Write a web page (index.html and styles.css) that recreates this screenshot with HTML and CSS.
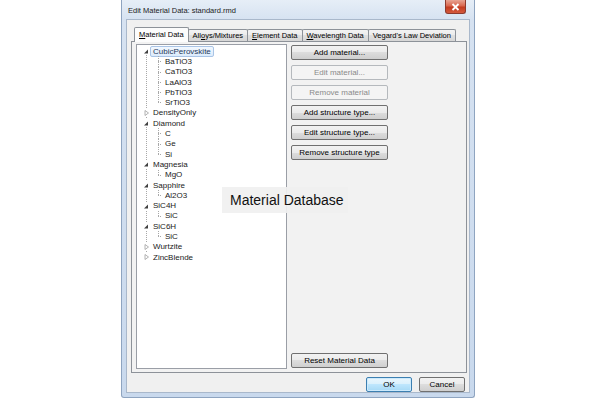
FILE: index.html
```html
<!DOCTYPE html>
<html lang="en">
<head>
    <meta charset="UTF-8">
    <title>Edit Material Data</title>
    <link rel="stylesheet" href="styles.css">
</head>
<body>
  <div class="window">
    <div class="titlebar">
      <span class="title">Edit Material Data: standard.rmd</span>
      <div class="close">
        <svg width="9" height="8" viewBox="0 0 9 8"><path d="M1.5 1 L7.5 7 M7.5 1 L1.5 7" stroke="#fff" stroke-width="1.8"/></svg>
      </div>
    </div>

    <div class="client">
      <div class="tabs">
        <div class="tab active"><u>M</u>aterial Data</div>
        <div class="tab">All<u>o</u>ys/Mixtures</div>
        <div class="tab"><u>E</u>lement Data</div>
        <div class="tab"><u>W</u>avelength Data</div>
        <div class="tab">Vegard's Law Deviation</div>
      </div>

      <div class="panel">
        <ul class="tree">
          <li>
            <div class="node"><span class="twisty open"></span><span class="label selected">CubicPerovskite</span></div>
            <ul>
              <li class="leaf"><span class="link"></span><span class="label">BaTiO3</span></li>
              <li class="leaf"><span class="link"></span><span class="label">CaTiO3</span></li>
              <li class="leaf"><span class="link"></span><span class="label">LaAlO3</span></li>
              <li class="leaf"><span class="link"></span><span class="label">PbTiO3</span></li>
              <li class="leaf"><span class="link"></span><span class="label">SrTiO3</span></li>
            </ul>
          </li>
          <li><div class="node"><span class="twisty shut"></span><span class="label">DensityOnly</span></div></li>
          <li>
            <div class="node"><span class="twisty open"></span><span class="label">Diamond</span></div>
            <ul>
              <li class="leaf"><span class="link"></span><span class="label">C</span></li>
              <li class="leaf"><span class="link"></span><span class="label">Ge</span></li>
              <li class="leaf"><span class="link"></span><span class="label">Si</span></li>
            </ul>
          </li>
          <li>
            <div class="node"><span class="twisty open"></span><span class="label">Magnesia</span></div>
            <ul><li class="leaf"><span class="link"></span><span class="label">MgO</span></li></ul>
          </li>
          <li>
            <div class="node"><span class="twisty open"></span><span class="label">Sapphire</span></div>
            <ul><li class="leaf"><span class="link"></span><span class="label">Al2O3</span></li></ul>
          </li>
          <li>
            <div class="node"><span class="twisty open"></span><span class="label">SiC4H</span></div>
            <ul><li class="leaf"><span class="link"></span><span class="label">SiC</span></li></ul>
          </li>
          <li>
            <div class="node"><span class="twisty open"></span><span class="label">SiC6H</span></div>
            <ul><li class="leaf"><span class="link"></span><span class="label">SiC</span></li></ul>
          </li>
          <li><div class="node"><span class="twisty shut"></span><span class="label">Wurtzite</span></div></li>
          <li><div class="node"><span class="twisty shut"></span><span class="label">ZincBlende</span></div></li>
        </ul>

        <div class="actions">
          <button class="btn">Add material...</button>
          <button class="btn" disabled>Edit material...</button>
          <button class="btn" disabled>Remove material</button>
          <button class="btn">Add structure type...</button>
          <button class="btn">Edit structure type...</button>
          <button class="btn">Remove structure type</button>
          <button class="btn reset">Reset Material Data</button>
        </div>
      </div>

      <div class="footer">
        <button class="btn default">OK</button>
        <button class="btn">Cancel</button>
      </div>
    </div>
  </div>

  <div class="caption">Material Database</div>
</body>
</html>
```

FILE: styles.css
```css
* {
    margin: 0;
    padding: 0;
    box-sizing: border-box;
}

body {
    width: 600px;
    height: 400px;
    background: #ffffff;
    font-family: "Liberation Sans", Arial, sans-serif;
    font-size: 7.5px;
    color: #000;
    overflow: hidden;
    position: relative;
}

/* Window frame */
.window {
    width: 354px;
    height: 398px;
    margin-left: 121px;
    display: flex;
    flex-direction: column;
    padding: 0 4px 4px;
    border: 1px solid #8ea4c0;
    border-top: none;
    border-radius: 0 0 3px 3px;
    background: linear-gradient(180deg, #e6eef7 0%, #d6e2f1 20px, #c9d9ed 100%);
}

.titlebar {
    height: 19px;
    display: flex;
    align-items: flex-start;
}

.title {
    padding: 6px 0 0 2px;
    color: #1b1b1b;
}

.close {
    margin-left: auto;
    margin-right: 4px;
    width: 21px;
    height: 14px;
    display: flex;
    align-items: center;
    justify-content: center;
    border: 1px solid #8c3a2e;
    border-top: none;
    border-radius: 0 0 3px 3px;
    background: linear-gradient(180deg, #e8a493 0%, #d9674f 45%, #c33c21 55%, #d4593c 100%);
}

.client {
    flex: 1;
    display: flex;
    flex-direction: column;
    padding: 7px 2px 0 4px;
    background: #f0f0f0;
    border: 1px solid #a9b8cb;
}

/* Tabs */
.tabs {
    display: flex;
    align-items: flex-end;
    padding-left: 3px;
    height: 14px;
    position: relative;
    z-index: 1;
}

.tab {
    height: 12px;
    padding: 1px 4px 0;
    margin-right: -1px;
    white-space: nowrap;
    border: 1px solid #8d9299;
    border-bottom: none;
    border-radius: 2px 2px 0 0;
    background: linear-gradient(180deg, #f3f3f3 0%, #ebebeb 50%, #dfdfdf 50%, #d7d7d7 100%);
}

.tab.active {
    height: 15px;
    margin-bottom: -1px;
    padding-top: 2px;
    background: #fcfcfc;
}

.panel {
    flex: 1;
    display: flex;
    gap: 4px;
    padding: 2px 4px 3px;
    border: 1px solid #8d9299;
    background: #f2f2f2;
}

/* Tree */
.tree {
    width: 151px;
    list-style: none;
    padding-top: 1px;
    font-size: 8px;
    border: 1px solid #9a9ea6;
    background-color: #fff;
    background-image: repeating-linear-gradient(180deg, #a8a8a8 0 1px, transparent 1px 2px);
    background-repeat: no-repeat;
    background-size: 1px 206px;
    background-position: 9px 6px;
}

.tree ul {
    list-style: none;
}

.node,
.leaf {
    height: 10.3px;
    display: flex;
    align-items: center;
    white-space: nowrap;
}

.node {
    padding-left: 6px;
}

.leaf {
    padding-left: 21px;
}

.twisty {
    width: 7px;
    height: 8px;
    background-color: #fff;
    background-repeat: no-repeat;
    background-position: center;
}

.twisty.open {
    background-image: url("data:image/svg+xml;utf8,<svg xmlns='http://www.w3.org/2000/svg' width='7' height='8'><path d='M5 2.5 L5 6.5 L1 6.5 Z' fill='%23404040'/></svg>");
}

.twisty.shut {
    background-image: url("data:image/svg+xml;utf8,<svg xmlns='http://www.w3.org/2000/svg' width='7' height='8'><path d='M2 1.5 L5.5 4 L2 6.5 Z' fill='none' stroke='%23a0a0a0' stroke-width='0.8'/></svg>");
}

.link {
    width: 4px;
    height: 100%;
    background:
        repeating-linear-gradient(180deg, #a8a8a8 0 1px, transparent 1px 2px) left top / 1px 100% no-repeat,
        repeating-linear-gradient(90deg, #a8a8a8 0 1px, transparent 1px 2px) left 5px / 100% 1px no-repeat;
}

.leaf:last-child .link {
    background-size: 1px 50%, 100% 1px;
}

.label {
    padding: 0 2px;
    line-height: 9px;
    border: 1px solid transparent;
    color: #1a1a1a;
}

.label.selected {
    color: #1e395b;
    border-color: #a9c4e6;
    border-radius: 2px;
    background: linear-gradient(180deg, #f2f8fe 0%, #dcebfc 100%);
}

/* Buttons */
.actions {
    width: 97px;
    display: flex;
    flex-direction: column;
    gap: 5px;
    padding: 1px 0 1px;
}

.btn {
    height: 15px;
    font-family: inherit;
    font-size: 8px;
    color: #000;
    border: 1px solid #707070;
    border-radius: 2px;
    background: linear-gradient(180deg, #f2f2f2 0%, #ebebeb 50%, #dddddd 50%, #cfcfcf 100%);
}

.btn:disabled {
    color: #8a8a8a;
    border-color: #b5b9bd;
    background: #f4f4f4;
}

.btn.reset {
    margin-top: auto;
}

.footer {
    display: flex;
    justify-content: flex-end;
    gap: 7px;
    padding: 4px 2px 0 0;
}

.footer .btn {
    width: 46px;
    height: 15px;
}

.btn.default {
    border-color: #3c7fb1;
    background: linear-gradient(180deg, #eaf6fd 0%, #d9f0fc 50%, #bee6fd 50%, #a7d9f5 100%);
    box-shadow: inset 0 0 0 1px #cdeafc;
}

/* Overlay caption */
.caption {
    position: absolute;
    left: 222px;
    top: 187px;
    width: 126px;
    height: 26px;
    padding: 5px 0 0 8px;
    white-space: nowrap;
    font-size: 14px;
    color: #111;
    background: rgba(240, 240, 240, 0.92);
}
```
